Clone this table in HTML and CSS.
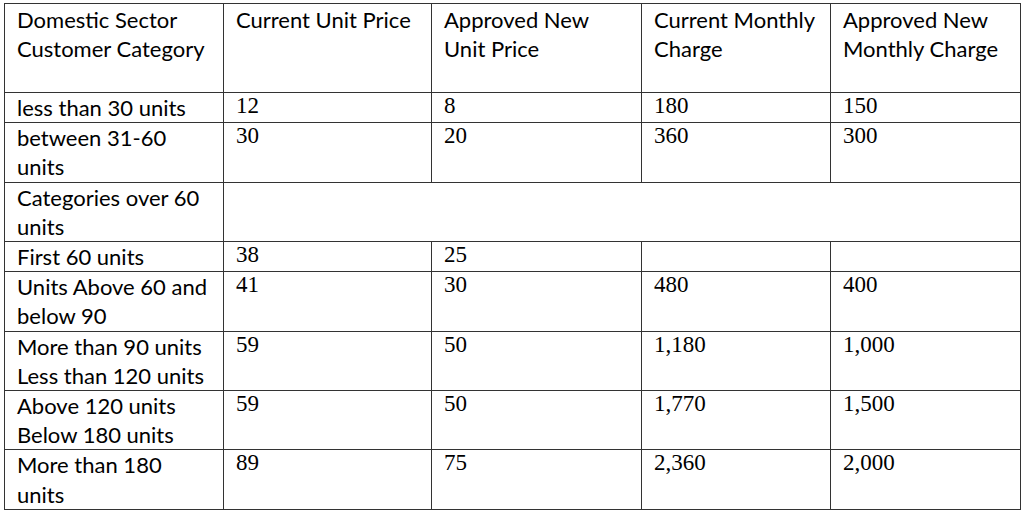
FILE: index.html
```html
<!DOCTYPE html>
<html>
<head>
<meta charset="utf-8">
<link rel="stylesheet" href="styles.css">
</head>
<body>
<div class="page">
<table class="tariff">
  <colgroup>
    <col class="c1"><col class="c2"><col class="c3"><col class="c4"><col class="c5">
  </colgroup>
  <tr class="head">
    <td>Domestic Sector<br>Customer Category</td>
    <td>Current Unit Price</td>
    <td>Approved New<br>Unit Price</td>
    <td>Current Monthly<br>Charge</td>
    <td>Approved New<br>Monthly Charge</td>
  </tr>
  <tr>
    <td>less than 30 units</td>
    <td class="num">12</td><td class="num">8</td><td class="num">180</td><td class="num">150</td>
  </tr>
  <tr>
    <td>between 31-60<br>units</td>
    <td class="num">30</td><td class="num">20</td><td class="num">360</td><td class="num">300</td>
  </tr>
  <tr>
    <td>Categories over 60<br>units</td>
    <td class="num" colspan="4"></td>
  </tr>
  <tr>
    <td>First 60 units</td>
    <td class="num">38</td><td class="num">25</td><td class="num"></td><td class="num"></td>
  </tr>
  <tr>
    <td>Units Above 60 and<br>below 90</td>
    <td class="num">41</td><td class="num">30</td><td class="num">480</td><td class="num">400</td>
  </tr>
  <tr>
    <td>More than 90 units<br>Less than 120 units</td>
    <td class="num">59</td><td class="num">50</td><td class="num">1,180</td><td class="num">1,000</td>
  </tr>
  <tr>
    <td>Above 120 units<br>Below 180 units</td>
    <td class="num">59</td><td class="num">50</td><td class="num">1,770</td><td class="num">1,500</td>
  </tr>
  <tr>
    <td>More than 180<br>units</td>
    <td class="num">89</td><td class="num">75</td><td class="num">2,360</td><td class="num">2,000</td>
  </tr>
</table>
</div>
</body>
</html>
```

FILE: styles.css
```css
html, body {
  margin: 0;
  padding: 0;
  background: #ffffff;
}

.page {
  padding: 3px 0 0 4px;
}

.tariff {
  border-collapse: collapse;
  table-layout: fixed;
  width: 1016px;
  font-family: Lato, "Liberation Sans", sans-serif;
  font-size: 22px;
  line-height: 29.2px;
  color: #000000;
}

.c1 { width: 219px; }
.c2 { width: 208px; }
.c3 { width: 210px; }
.c4 { width: 189px; }
.c5 { width: 190px; }

.tariff td {
  border: 1px solid #333333;
  padding: 0 12px;
  vertical-align: top;
  white-space: nowrap;
}

.tariff .head td {
  height: 87px;
  padding-top: 1px;
  padding-bottom: 0;
}

.tariff td.num {
  font-family: "Liberation Serif", "Times New Roman", serif;
  font-size: 23px;
  line-height: 25px;
  padding-left: 12px;
}
```
